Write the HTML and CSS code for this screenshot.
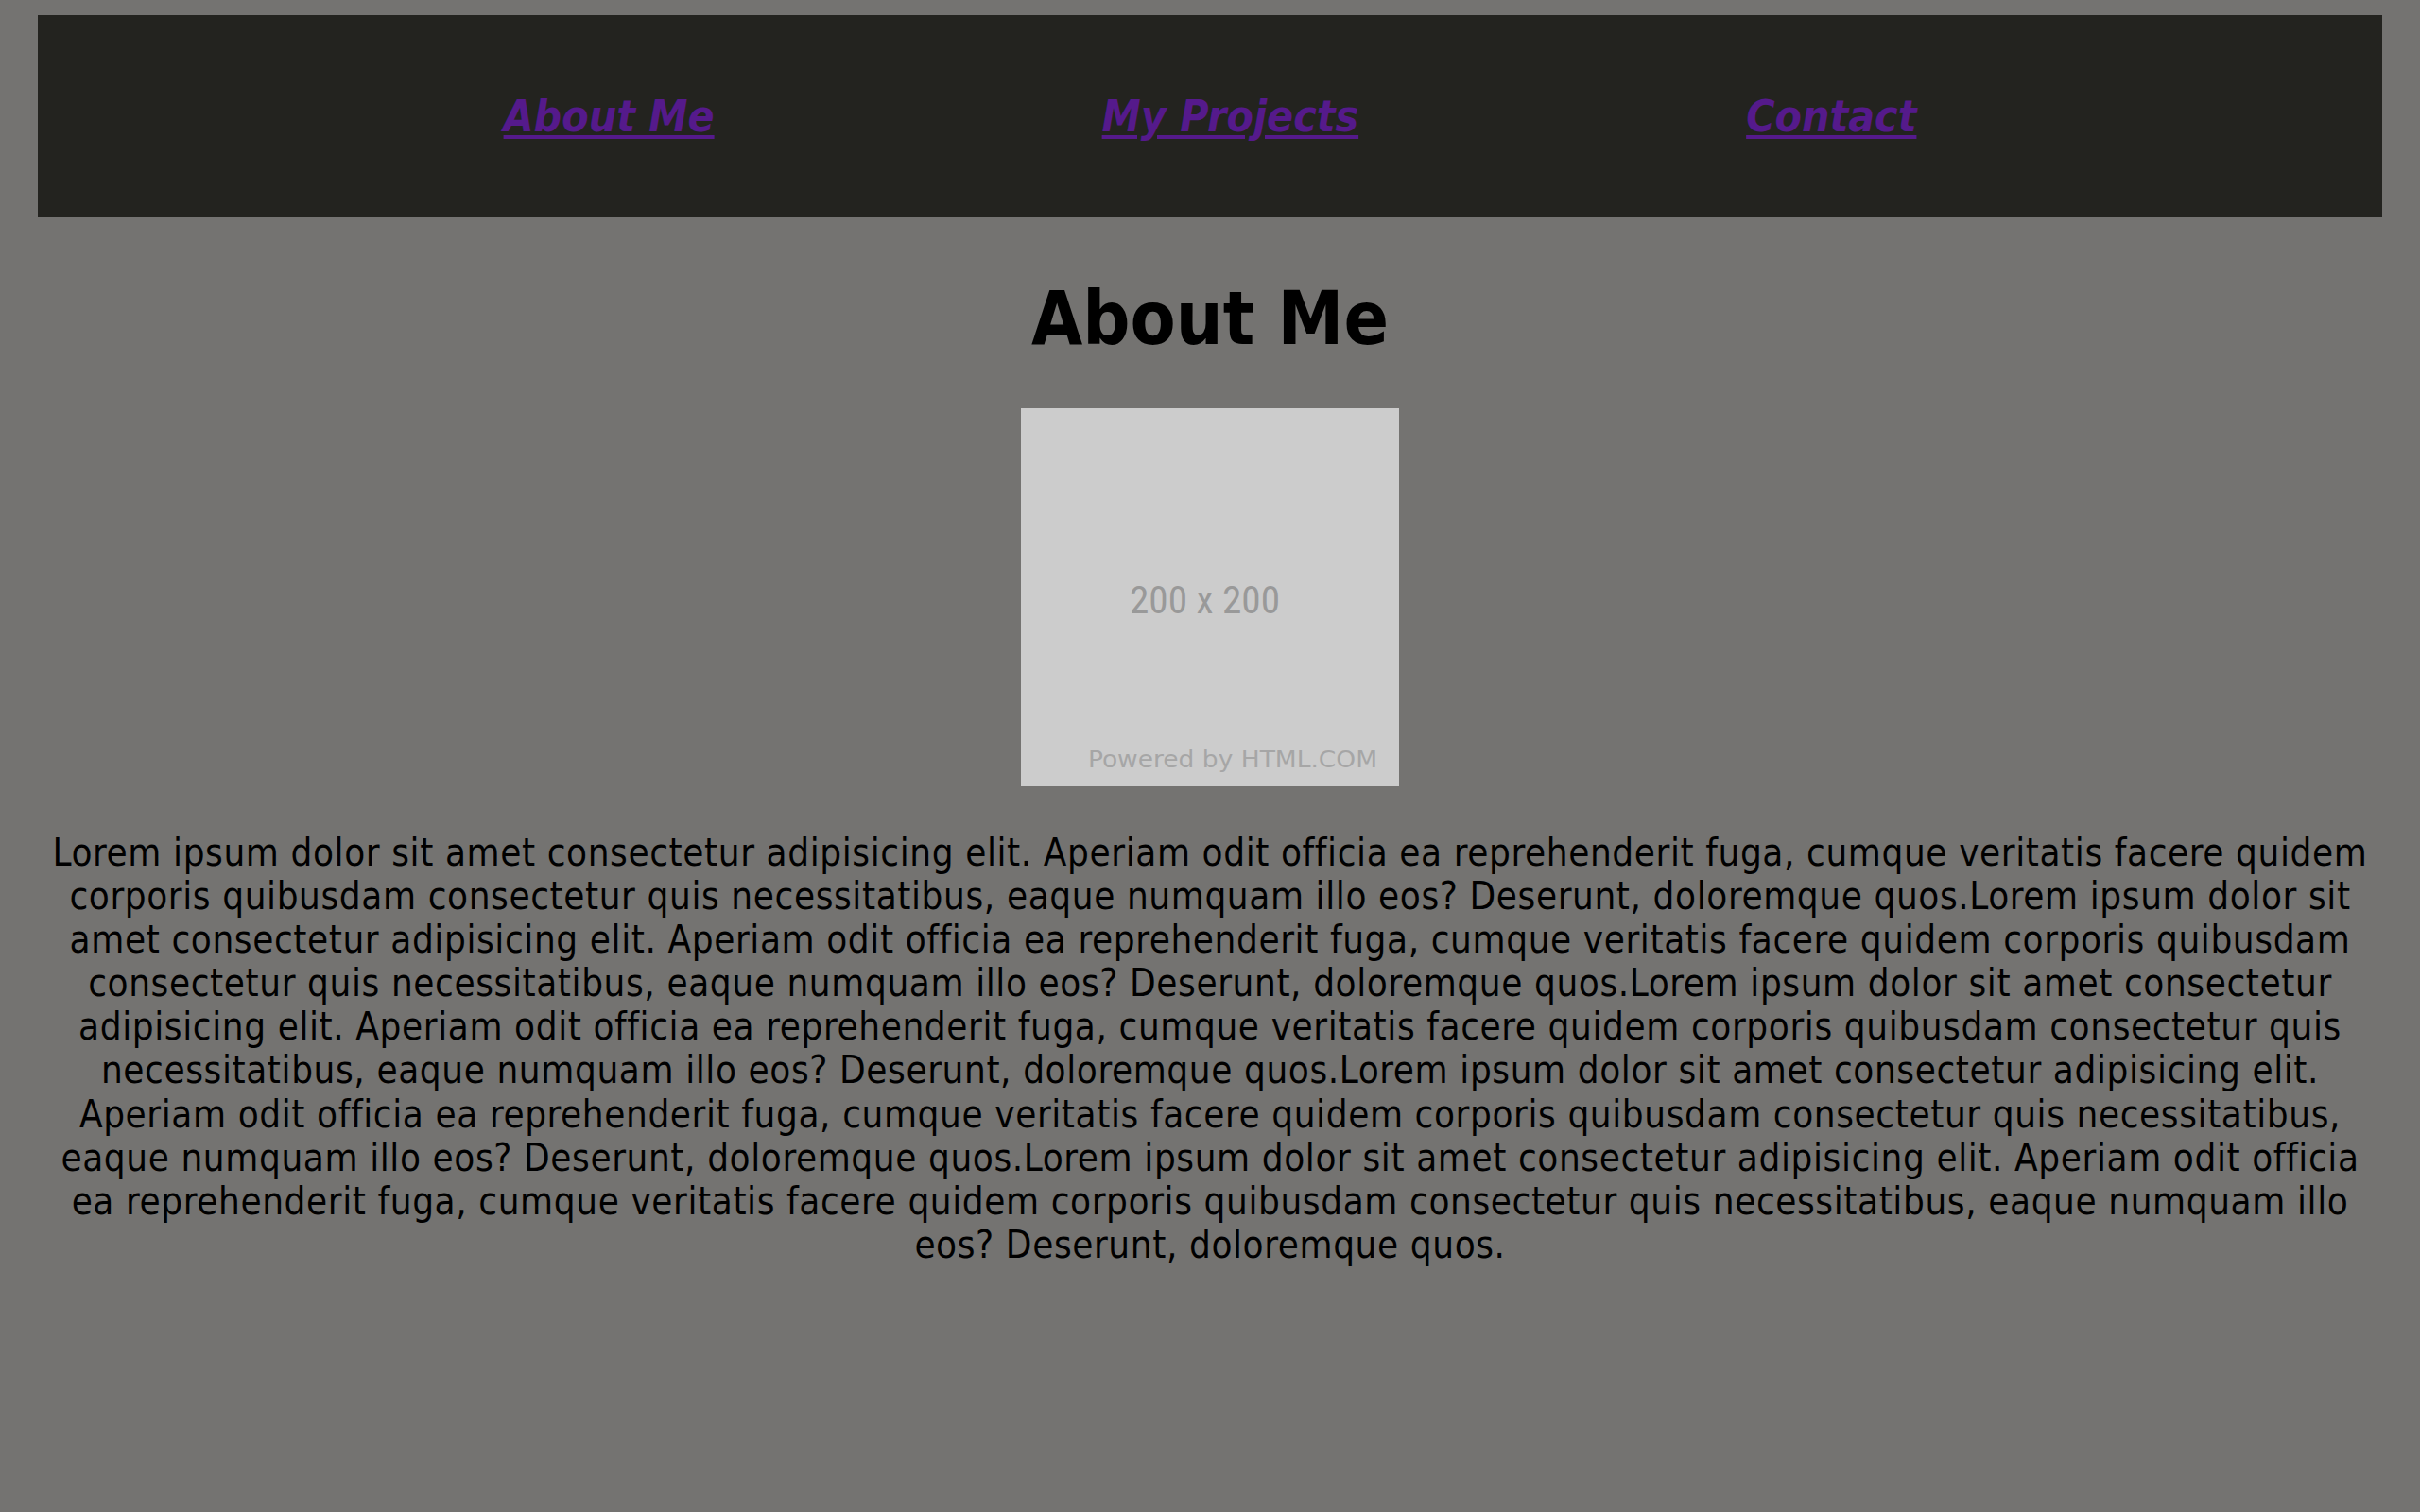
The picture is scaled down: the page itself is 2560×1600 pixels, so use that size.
FILE: index.html
```html
<!DOCTYPE html>
<html lang="en">
<head>
<meta charset="utf-8">
<title>About Me</title>
<link rel="stylesheet" href="styles.css">
</head>
<body>
<nav class="topnav">
  <ul class="nav-list">
    <li><a class="nav-link" href="#about">About Me</a></li>
    <li><a class="nav-link" href="#projects">My Projects</a></li>
    <li><a class="nav-link" href="#contact">Contact</a></li>
  </ul>
</nav>
<main class="about">
  <h1 class="about-title">About Me</h1>
  <svg class="about-photo" width="400" height="400" viewBox="0 0 400 400" xmlns="http://www.w3.org/2000/svg" role="img" aria-label="200 x 200">
    <rect x="0" y="0" width="400" height="400" fill="#cccccc"/>
    <text x="115" y="217" font-family="Roboto, 'Liberation Sans', sans-serif" font-size="41" fill="#999999" textLength="159" lengthAdjust="spacingAndGlyphs">200 x 200</text>
    <text x="71" y="380" font-family="'DejaVu Sans', sans-serif" font-size="25" fill="#a6a6a6" textLength="306" lengthAdjust="spacingAndGlyphs">Powered by HTML.COM</text>
  </svg>
  <p class="about-text">Lorem ipsum dolor sit amet consectetur adipisicing elit. Aperiam odit officia ea reprehenderit fuga, cumque veritatis facere quidem corporis quibusdam consectetur quis necessitatibus, eaque numquam illo eos? Deserunt, doloremque quos.Lorem ipsum dolor sit amet consectetur adipisicing elit. Aperiam odit officia ea reprehenderit fuga, cumque veritatis facere quidem corporis quibusdam consectetur quis necessitatibus, eaque numquam illo eos? Deserunt, doloremque quos.Lorem ipsum dolor sit amet consectetur adipisicing elit. Aperiam odit officia ea reprehenderit fuga, cumque veritatis facere quidem corporis quibusdam consectetur quis necessitatibus, eaque numquam illo eos? Deserunt, doloremque quos.Lorem ipsum dolor sit amet consectetur adipisicing elit. Aperiam odit officia ea reprehenderit fuga, cumque veritatis facere quidem corporis quibusdam consectetur quis necessitatibus, eaque numquam illo eos? Deserunt, doloremque quos.Lorem ipsum dolor sit amet consectetur adipisicing elit. Aperiam odit officia ea reprehenderit fuga, cumque veritatis facere quidem corporis quibusdam consectetur quis necessitatibus, eaque numquam illo eos? Deserunt, doloremque quos.</p>
</main>
</body>
</html>
```

FILE: styles.css
```css
html, body {
  margin: 0;
  padding: 0;
}

body {
  background: #747371;
  padding: 16px 40px 0;
  min-height: 1600px;
  box-sizing: border-box;
  font-family: "DejaVu Sans Condensed", "DejaVu Sans", sans-serif;
  font-stretch: condensed;
  color: #000;
}

.topnav {
  background: #23231f;
  height: 214px;
  display: flex;
  align-items: center;
  justify-content: center;
}

.nav-list {
  list-style: none;
  margin: 0;
  padding: 0;
  display: flex;
  gap: 410px;
}

.nav-link {
  font-size: 46px;
  font-weight: bold;
  font-style: italic;
  color: #551a8b;
  text-decoration: underline;
  text-decoration-thickness: 4px;
  text-underline-offset: 4px;
}

.about {
  display: flex;
  flex-direction: column;
  align-items: center;
}

.about-title {
  margin: 61px 0 0;
  font-size: 78px;
  line-height: 93px;
  font-weight: bold;
}

.about-photo {
  display: block;
  margin-top: 48px;
}

.about-text {
  margin: 47px 0 0;
  font-size: 40px;
  line-height: 46.1px;
  letter-spacing: 0.6px;
  text-align: center;
}
```
